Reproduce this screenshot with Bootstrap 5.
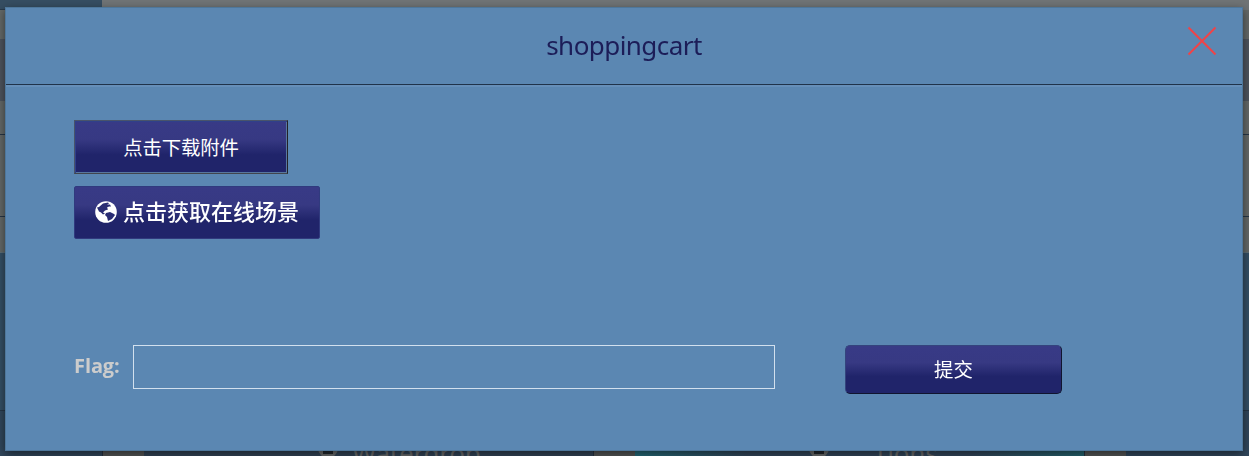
<!DOCTYPE html>
<html lang="zh-CN">
<head>
<meta charset="utf-8">
<meta name="viewport" content="width=device-width, initial-scale=1">
<title>shoppingcart</title>
<link href="https://cdn.jsdelivr.net/npm/bootstrap@5.3.0/dist/css/bootstrap.min.css" rel="stylesheet">
<style>
body{height:456px;overflow:hidden;background:#34506a;font-family:"Noto Sans","Noto Sans CJK SC",sans-serif}
.page-behind{height:456px}
.strip-top{height:10px;background:#707476}
.strip-top div{width:102px;background:#364e62;border-bottom:1px solid #2a3b4b}
.strip-gray{background:#646968}
.strip-slate{background:#4e545e;height:62px}
.strip-line{border-bottom:1px solid #263647}
.strip-blue{background:#344f65;height:159px;border-top:1px solid #5d6d75}
.tiles{height:45px;background:#31475c}
.gap-tile{background:#545656;width:42px;border-left:1px solid #263240}
.tile{height:45px;background:#324456;color:#6a6c6c;font-size:26px;line-height:30px;padding-top:27px;font-family:"Noto Sans",sans-serif}
.tile span{letter-spacing:-.2px}
.tile-teal{background:linear-gradient(90deg,#246a78,#32465a 25%,#32465a 75%,#246470)}
.dialog-layer{padding:7px 6px 5px 5px}
.dialog-box{height:444px;background:#5b87b2;border:1px solid #4e779b;border-radius:0;box-shadow:0 3px 9px rgba(0,0,0,.5)}
.dialog-head{height:77px;border-bottom:1px solid #20334a;box-shadow:0 2px 0 #668fb9;padding:0;border-radius:0}
.dialog-title{font-size:26px;line-height:39px;color:#1c1d58;letter-spacing:-.55px;margin-top:-1px}
.dialog-close{right:23px;top:16px;width:34px;height:34px;border:0;padding:0;background:none;line-height:0}
.btn-shade,.btn-shade:hover{color:#fff;background:linear-gradient(#383a86 0%,#373983 35%,#20246a 65%,#20246a 100%);padding:0;border-radius:2px}
.btn-download,.btn-download:hover{width:214px;height:54px;border:1px solid #49546a;border-right-color:#222126;border-bottom-color:#42464d;border-radius:0;box-shadow:inset 1px 1px 0 #30408a,inset -1px -1px 0 #58779f;font-size:19.4px;line-height:53px;letter-spacing:-.1px}
.btn-scene,.btn-scene:hover{width:246px;height:53px;border:1px solid #303a7e;font-size:22px;line-height:49px;margin-top:12px}
.btn-scene span{margin-top:-2px}
.btn-send,.btn-send:hover{width:217px;height:49px;border:1px solid #34447d;border-right-color:#11152f;border-bottom-color:#11152f;border-radius:5px;font-size:19.4px;line-height:48px;margin:0 0 0 70px}
.dialog-main{padding:35px 68px 0}
.flag-row{margin-top:106px}
.flag-label{width:59px;color:#ccc;font-size:20px;font-weight:700;line-height:42px;font-family:"Open Sans",sans-serif;letter-spacing:-.1px}
.flag-input,.flag-input:focus{width:642px;height:44px;background:transparent;border:1px solid #d2e0ee;border-radius:0;box-shadow:none}
</style>
</head>
<body>
<div class="page-behind d-flex flex-column" aria-hidden="true">
  <div class="strip-top d-flex"><div></div></div>
  <div class="strip-gray" style="height:29px"></div>
  <div class="strip-slate"></div>
  <div class="strip-gray strip-line" style="height:34px"></div>
  <div class="strip-gray strip-line" style="height:82px"></div>
  <div class="strip-gray" style="height:35px"></div>
  <div class="strip-blue strip-line"></div>
  <div class="tiles d-flex">
    <div style="width:102px"></div><div class="gap-tile"></div>
    <div class="tile d-flex" style="width:449px;padding-left:172px">
      <svg width="24" height="24" viewBox="0 0 24 24" fill="none" stroke="#6a6c6c" stroke-width="4"><circle cx="12" cy="10" r="8"/><path d="M7 13h10" stroke="#20262c" stroke-width="6"/></svg>
      <span style="margin-left:12px">Waterdrop</span>
    </div>
    <div class="gap-tile"></div>
    <div class="tile tile-teal d-flex" style="width:449px;padding-left:172px">
      <svg width="24" height="24" viewBox="0 0 24 24" fill="none" stroke="#6a6c6c" stroke-width="4"><circle cx="12" cy="10" r="8"/><path d="M7 13h10" stroke="#20262c" stroke-width="6"/></svg>
      <span style="margin-left:42px">Tjons</span>
    </div>
    <div class="gap-tile"></div>
  </div>
</div>
<div class="dialog-layer position-fixed top-0 start-0 w-100 h-100">
  <div class="dialog-box modal-content">
    <div class="dialog-head modal-header justify-content-center position-relative">
      <h1 class="dialog-title mb-0 fw-normal">shoppingcart</h1>
      <button class="dialog-close position-absolute" type="button" aria-label="关闭">
        <svg width="34" height="34" viewBox="0 0 34 34" fill="none" stroke="#f04348" stroke-width="2"><path d="M3.500 3.500 30.500 30.500M30.500 3.500 3.500 30.500"/></svg>
      </button>
    </div>
    <div class="dialog-main modal-body">
      <div class="d-flex flex-column align-items-start">
        <button class="btn btn-shade btn-download" type="button">点击下载附件</button>
        <button class="btn btn-shade btn-scene d-flex align-items-center justify-content-center" type="button">
          <svg width="22" height="22" viewBox="0 0 22 22" style="margin:-2px 6px 0 0"><circle cx="11" cy="11" r="10.8" fill="#fff"/><path fill="#292c73" d="M4 6 8 2.500 13 1.500l1 1-2 1 3 0 1 2-2 0-2 1 1 2-3 1-2 2 2 1-2 1-2-2-2-1-2-4ZM11 12l4-1 4 2 1 1-3 4-4 2-1-4-2-2Z"/></svg>
          <span class="fw-medium">点击获取在线场景</span>
        </button>
      </div>
      <form class="flag-row d-flex align-items-start">
        <label class="flag-label" for="flag">Flag:</label>
        <input class="form-control flag-input flex-shrink-0" id="flag" type="text">
        <button class="btn btn-shade btn-send flex-shrink-0" type="button">提交</button>
      </form>
    </div>
  </div>
</div>
<script src="https://cdn.jsdelivr.net/npm/bootstrap@5.3.0/dist/js/bootstrap.bundle.min.js"></script>
</body>
</html>
